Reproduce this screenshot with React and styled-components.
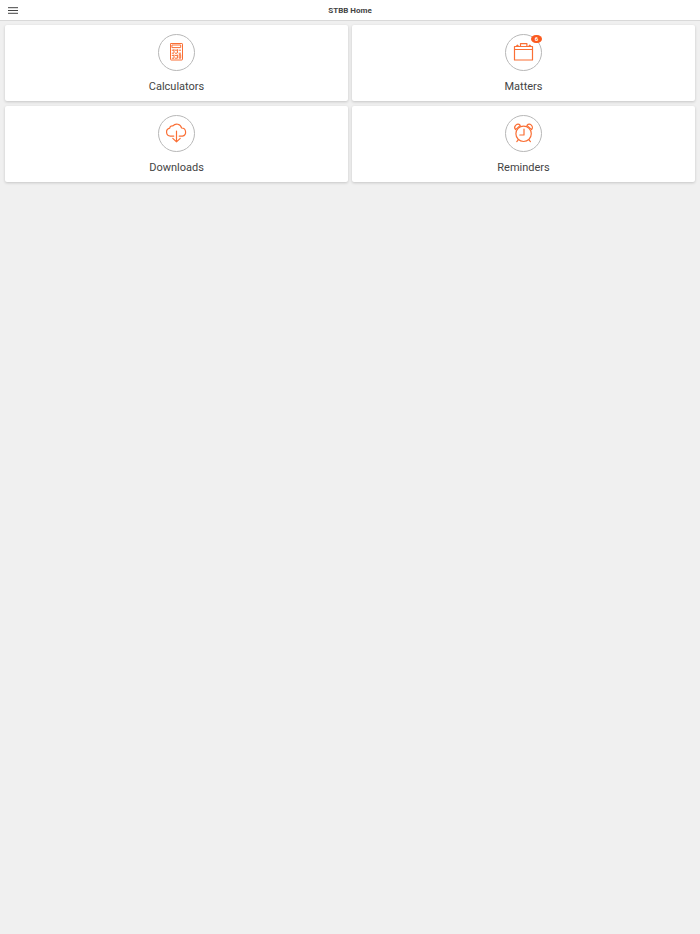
import React from 'react'
import styled, { createGlobalStyle } from 'styled-components'

const GlobalStyle=createGlobalStyle`
    body {
        margin: 0;
        background-color: #f0f0f0;
        font-family: Roboto, "Liberation Sans", sans-serif;
        color: #444;
    }
`

const Header=styled.header`
    display: grid;
    grid-template-columns: 1fr auto 1fr;
    align-items: center;
    height: 19px;
    padding: 1px 8px 0;
    background-color: #fff;
    border-bottom: 1px solid #d9d9d9;
`

const MenuButton=styled.button`
    display: flex;
    justify-self: start;
    padding: 0;
    border: 0;
    background: none;
    cursor: pointer;
`

const Title=styled.h1`
    margin: 0;
    font-size: 8px;
    line-height: 13px;
    font-weight: 700;
`

const CardGrid=styled.main`
    display: grid;
    grid-template-columns: 1fr 1fr;
    gap: 5px 4px;
    padding: 4px 5px;
`

const Card=styled.button`
    display: flex;
    flex-direction: column;
    align-items: center;
    gap: 9px;
    padding: 9px 8px 8px;
    border: 0;
    border-radius: 2px;
    background-color: #fff;
    box-shadow: 0 1px 3px rgba(0,0,0,0.18);
    color: inherit;
    font-family: inherit;
    cursor: pointer;
`

const IconCircle=styled.span`
    position: relative;
    display: flex;
    box-sizing: border-box;
    width: 37px;
    height: 37px;
    border: 1px solid #b8b8b8;
    border-radius: 50%;
`

const Icon=styled.svg`
    width: 35px;
    height: 35px;
    fill: none;
    stroke: #fa6f35;
    stroke-width: ${props => props.$weight || 1.2};
    stroke-linecap: round;
    stroke-linejoin: round;
`

const Badge=styled.span`
    position: absolute;
    top: 0;
    right: -1px;
    width: 11px;
    border-radius: 5px / 4px;
    background-color: #fb5a1e;
    color: #fff;
    font-size: 6px;
    line-height: 8px;
    font-weight: 700;
    text-align: center;
`

const CardLabel=styled.span`
    font-size: 11px;
    line-height: 13px;
`

const CalculatorIcon=() => (
  <Icon viewBox="1 1 35 35" $weight={1} aria-hidden="true">
    <rect x="12.5" y="9.5" width="12" height="16.5" rx="0.6" />
    <rect x="14.3" y="11" width="8.4" height="2.6" />
    <path d="M14.2 16.2h1.4M17.4 16.2h1.4M21 16.2h1.6M14.2 19.2h1.4M17.4 19.2h1.4M21 19.2h1.6M14.2 21.4h1.4M17.4 21.4h1.4M14.2 24.2h1.4M17.4 24.2h1.4M16 15.6v3M19.4 15.6v3M16 21v3M19.4 21v3M21.2 21v3.2h1.5V21z" />
  </Icon>
)

const BriefcaseIcon=() => (
  <Icon viewBox="1 1 35 35" aria-hidden="true">
    <rect x="9.5" y="12.5" width="18" height="13.5" />
    <path d="M9.5 15.5h18M15.5 12.2V9.6h6.4v2.6M11.2 12.4l1.2-1.2 1.2 1.2zM23.6 12.4l1.2-1.2 1.2 1.2z" />
  </Icon>
)

const CloudIcon=() => (
  <Icon viewBox="1 1 35 35" aria-hidden="true">
    <path d="M15.8 21.1h-3.4a4 4 0 0 1-.7-7.9 2.6 2.6 0 0 1 3.2-2.3 5 5 0 0 1 8.7 2.1 4.1 4.1 0 0 1 .8 8.1h-3.2M18.5 16v10.8M14.8 23.4l3.7 3.5 3.7-3.5" />
  </Icon>
)

const AlarmIcon=() => (
  <Icon viewBox="1 1 35 35" aria-hidden="true">
    <circle cx="18.6" cy="18.8" r="7.7" />
    <path d="M10.6 14.6a3 3 0 1 1 4.7-4.2zM26.6 14.6a3 3 0 1 0-4.7-4.2zM13.4 24.6l-1.6 2M23.8 24.6l1.6 2" />
    <path d="M19 14v6h-4.2" />
  </Icon>
)

const tiles=[
  { name: 'Calculators', TileIcon: CalculatorIcon },
  { name: 'Matters', TileIcon: BriefcaseIcon, count: 6 },
  { name: 'Downloads', TileIcon: CloudIcon },
  { name: 'Reminders', TileIcon: AlarmIcon },
]

const Tile=(props) =>{
  const { name, TileIcon, count }=props

  return (
    <Card type="button">
      <IconCircle>
        <TileIcon />
        {count && <Badge>{count}</Badge>}
      </IconCircle>
      <CardLabel>{name}</CardLabel>
    </Card>
  )
}

const App=() => (
  <>
    <GlobalStyle />
    <Header>
      <MenuButton type="button" aria-label="Menu">
        <svg width="10" height="7" viewBox="0 0 10 7" stroke="#444" aria-hidden="true">
          <path d="M0 .7h10M0 3.5h10M0 6.3h10" />
        </svg>
      </MenuButton>
      <Title>STBB Home</Title>
    </Header>
    <CardGrid>
      {tiles.map(tile => <Tile key={tile.name} {...tile} />)}
    </CardGrid>
  </>
)

export default App
